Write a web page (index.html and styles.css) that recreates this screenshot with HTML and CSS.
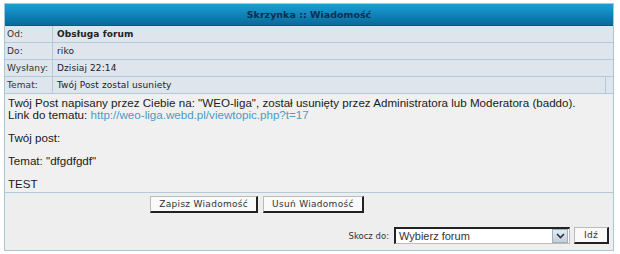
FILE: index.html
```html
<!DOCTYPE html>
<html lang="pl">
<head>
<meta charset="UTF-8">
<title>Skrzynka :: Wiadomość</title>
<link rel="stylesheet" href="styles.css">
</head>
<body>
    <div class="box">
        <div class="head">Skrzynka :: Wiadomość</div>
        <div class="row">
            <div class="label">Od:</div>
            <div class="value"><b>Obsługa forum</b></div>
        </div>
        <div class="row">
            <div class="label">Do:</div>
            <div class="value">riko</div>
        </div>
        <div class="row">
            <div class="label">Wysłany:</div>
            <div class="value">Dzisiaj 22:14</div>
        </div>
        <div class="row row-subject">
            <div class="label">Temat:</div>
            <div class="value">Twój Post zostal usuniety</div>
            <div class="value"></div>
        </div>
        <div class="message">
            Twój Post napisany przez Ciebie na: "WEO-liga", został usunięty przez Administratora lub Moderatora (baddo).<br>
            Link do tematu: <a href="#">http://weo-liga.webd.pl/viewtopic.php?t=17</a><br>
            <br>
            Twój post:<br>
            <br>
            Temat: "dfgdfgdf"<br>
            <br>
            TEST
        </div>
        <div class="actions">
            <div class="buttons">
                <button class="btn">Zapisz Wiadomość</button>
                <button class="btn">Usuń Wiadomość</button>
            </div>
            <div class="jump">
                <span class="jump-label">Skocz do:</span>
                <div class="select">
                    <span>Wybierz forum</span>
                    <span class="arrow">
                        <svg width="9" height="6" viewBox="0 0 9 6"><path d="M1 1 L4.5 4.5 L8 1" fill="none" stroke="#2b3440" stroke-width="1.6"/></svg>
                    </span>
                </div>
                <button class="btn btn-go">Idź</button>
            </div>
        </div>
    </div>
</body>
</html>
```

FILE: styles.css
```css
body {
    margin: 0;
    padding: 3px 0 0 4px;
    background: #fff;
    font-family: "DejaVu Sans", Verdana, sans-serif;
    color: #222;
}
.box {
    width: 608px;
    border: 1px solid #a9c6d5;
}
.head {
    height: 21px;
    line-height: 21px;
    text-align: center;
    font-size: 9.5px;
    font-weight: bold;
    color: #0b2f52;
    background: linear-gradient(#1c9fd4, #0d7fb4 60%, #0a6b98);
    border-bottom: 1px solid #0a5a80;
}
.row {
    display: grid;
    grid-template-columns: 48px 1fr;
    height: 16px;
    border-bottom: 1px solid #b3c9d6;
    background: #dfe5ec;
    font-size: 9px;
}
.row-subject {
    grid-template-columns: 48px 1fr 8px;
}
.label, .value {
    line-height: 16px;
    padding-left: 2px;
    letter-spacing: 0.1px;
}
.label {
    color: #333;
    border-right: 1px solid #b3c9d6;
}
.value {
    padding-left: 4px;
}
.row-subject .value + .value {
    border-left: 1px solid #b3c9d6;
    padding: 0;
}
.message {
    height: 92px;
    padding: 3px 4px 3px 3px;
    background: #f0f0f0;
    font-family: "Liberation Sans", Tahoma, sans-serif;
    font-size: 11.6px;
    line-height: 11.6px;
    color: #1a1a1a;
    border-bottom: 1px solid #b3c9d6;
}
.message a {
    color: #4a9cc4;
    text-decoration: none;
}
.actions {
    height: 57px;
    background: #eeeeee;
    display: flex;
    flex-direction: column;
}
.buttons {
    display: flex;
    justify-content: center;
    gap: 5px;
    padding: 3px 104px 0 0;
}
.btn {
    height: 17px;
    padding: 0 8px;
    font-family: "DejaVu Sans", Verdana, sans-serif;
    font-size: 9px;
    letter-spacing: 0.3px;
    color: #333;
    background: #fafafa;
    border: 1px solid;
    border-color: #bbb #222 #222 #bbb;
    border-width: 1px 2px 2px 1px;
}
.jump {
    display: flex;
    justify-content: flex-end;
    align-items: center;
    gap: 4px;
    padding: 14px 4px 0 0;
}
.jump-label {
    font-size: 8.5px;
    color: #333;
    margin-right: 1px;
}
.select {
    width: 170px;
    height: 14px;
    display: flex;
    align-items: center;
    justify-content: space-between;
    background: #fff;
    border: 1px solid;
    border-width: 2px 1px 1px 2px;
    border-color: #222 #bbb #bbb #222;
    font-family: "Liberation Sans", Tahoma, sans-serif;
    font-size: 11px;
    color: #333;
    padding-left: 3px;
}
.arrow {
    width: 14px;
    height: 12px;
    margin-right: 1px;
    background: linear-gradient(#e4ecf2, #c2cfd9);
    border: 1px solid #9eb0bf;
    display: flex;
    align-items: center;
    justify-content: center;
}
.btn-go {
    padding: 0 9px;
    height: 17px;
}
```
